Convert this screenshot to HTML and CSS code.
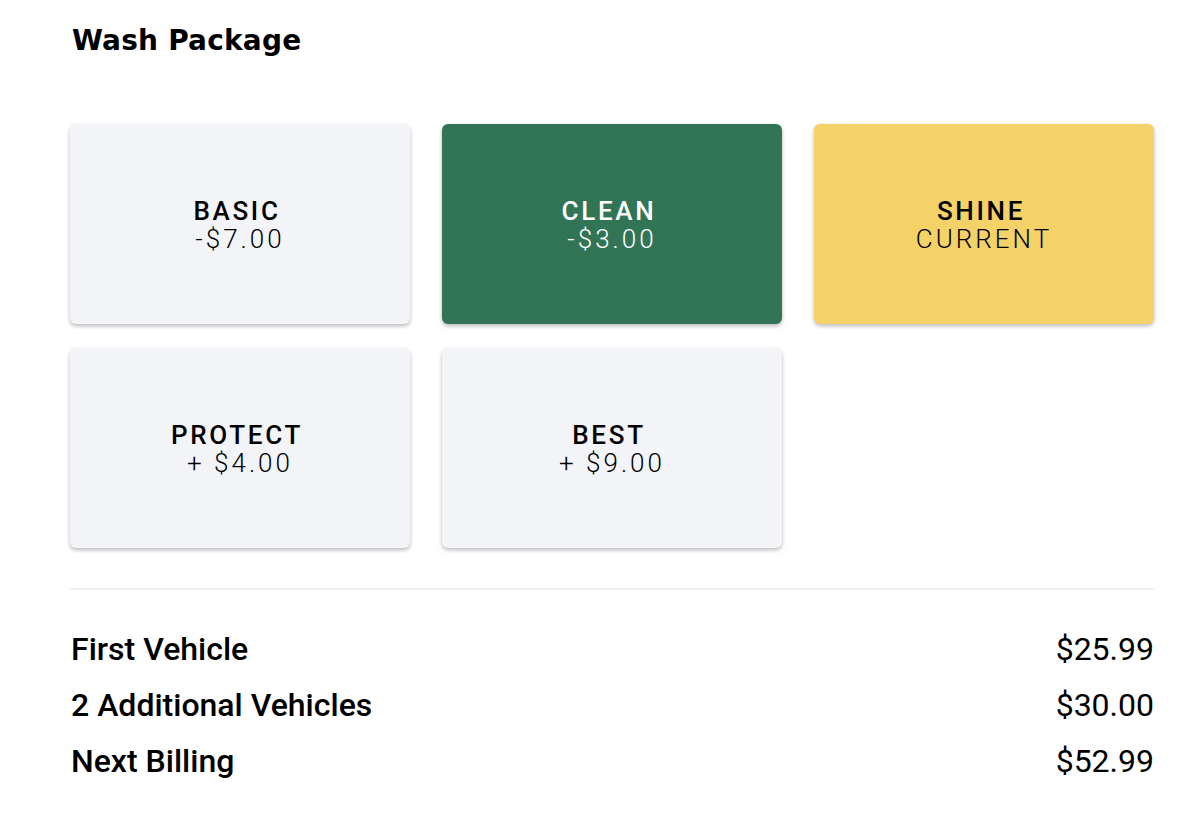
FILE: index.html
```html
<!DOCTYPE html>
<html lang="en">
<head>
<meta charset="utf-8">
<title>Wash Package</title>
<link rel="stylesheet" href="styles.css">
</head>
<body>
<main class="page">
  <h1 class="title">Wash Package</h1>
  <div class="packages">
    <div class="pkg pkg-light"><span class="pkg-name">BASIC</span><span class="pkg-price">-$7.00</span></div>
    <div class="pkg pkg-green"><span class="pkg-name">CLEAN</span><span class="pkg-price">-$3.00</span></div>
    <div class="pkg pkg-yellow"><span class="pkg-name">SHINE</span><span class="pkg-price">CURRENT</span></div>
    <div class="pkg pkg-light"><span class="pkg-name">PROTECT</span><span class="pkg-price">+ $4.00</span></div>
    <div class="pkg pkg-light"><span class="pkg-name">BEST</span><span class="pkg-price">+ $9.00</span></div>
  </div>
  <hr class="divider">
  <div class="summary">
    <div class="row"><span class="label">First Vehicle</span><span class="amount">$25.99</span></div>
    <div class="row"><span class="label">2 Additional Vehicles</span><span class="amount">$30.00</span></div>
    <div class="row"><span class="label">Next Billing</span><span class="amount">$52.99</span></div>
  </div>
</main>
</body>
</html>
```
FILE: styles.css
```css
html, body {
  margin: 0;
  padding: 0;
  background: #ffffff;
}
body {
  font-family: Roboto, "Liberation Sans", sans-serif;
  color: #000;
}
.page {
  width: 1084px;
  padding: 0 0 0 70px;
}
.title {
  margin: 0;
  padding: 23px 0 0 2px;
  font-family: "DejaVu Sans", "Open Sans", sans-serif;
  font-weight: 700;
  font-size: 28px;
  line-height: 36px;
  letter-spacing: 0.2px;
}
.packages {
  margin-top: 65px;
  display: grid;
  grid-template-columns: repeat(3, 340px);
  column-gap: 32px;
  row-gap: 24px;
}
.pkg {
  height: 200px;
  border-radius: 6px;
  box-shadow: 0 2px 4px rgba(0, 0, 0, 0.28);
  display: flex;
  flex-direction: column;
  align-items: center;
  justify-content: center;
  text-align: center;
  padding-top: 1px;
  box-sizing: border-box;
}
.pkg-light { background: #f3f4f8; color: #000; }
.pkg-green { background: #327556; color: #fff; }
.pkg-yellow { background: #f4d267; color: #000; }
.pkg-name {
  font-weight: 500;
  font-size: 26px;
  line-height: 28px;
  letter-spacing: 2.7px;
  padding-right: 6px;
}
.pkg-price {
  font-weight: 300;
  font-size: 26px;
  line-height: 28px;
  letter-spacing: 3px;
}
.divider {
  margin: 40px 0 0 0;
  border: 0;
  border-top: 2px solid #efefef;
  height: 0;
}
.summary {
  padding-top: 31px;
  display: flex;
  flex-direction: column;
}
.row {
  display: flex;
  justify-content: space-between;
  align-items: baseline;
  height: 56px;
  line-height: 56px;
}
.label {
  font-weight: 500;
  font-size: 32px;
  padding-left: 1px;
}
.amount {
  font-weight: 400;
  font-size: 32px;
}
```
